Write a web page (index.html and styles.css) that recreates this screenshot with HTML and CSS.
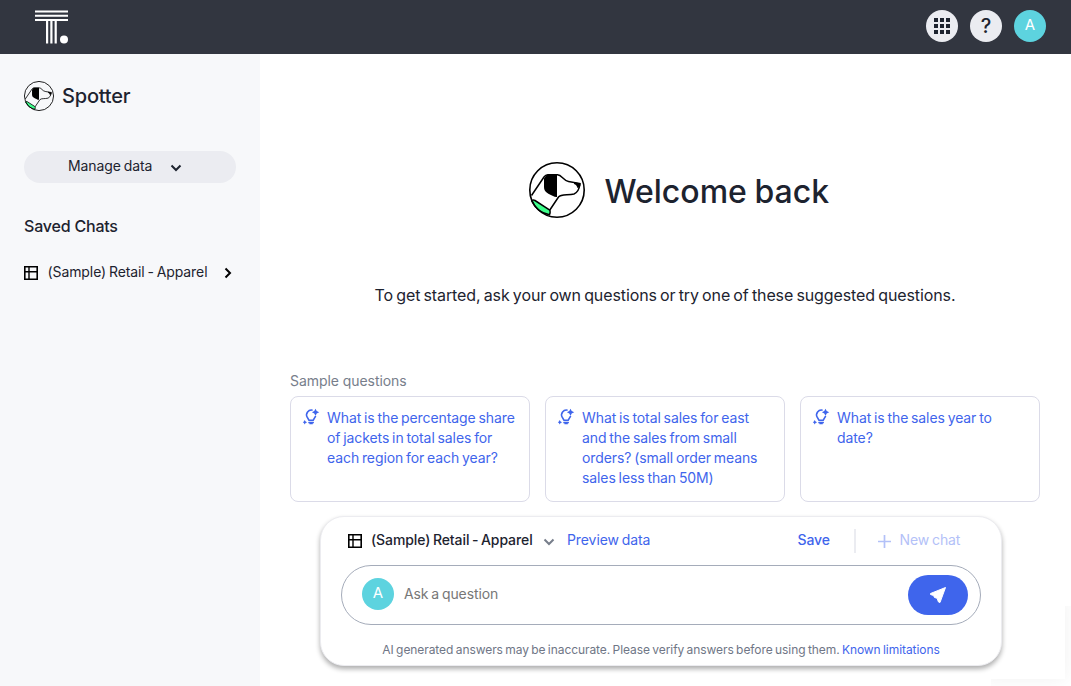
FILE: index.html
```html
<!DOCTYPE html>
<html lang="en">
<head>
<meta charset="utf-8">
<title>Spotter</title>
<link rel="stylesheet" href="styles.css">
</head>
<body>
<svg class="defs" width="0" height="0">
  <symbol id="dog" viewBox="0 0 56 56">
    <path d="M2.500 33.500 15 15Q16.500 12.800 19 12.800H28.500C33 13 34 18.500 39.500 19.500L51 21.500Q50 30 45 32C39 33.500 32 32 29.500 35L20.500 48.500" fill="none" stroke="#000" stroke-width="1.500"/>
    <path d="M28 12.500V35Q26 35.300 24 34C20 31.500 15 31 15 25V16.500L18 12.500Z"/>
    <path d="M45 20l6.500 1.500q.5 4-3 4.500-1-3.500-3.500-4z"/>
    <path d="M3 39.500Q3.500 37 6 38.500L20 47.500Q22 49 20.500 52.800Q8 50 3 39.500Z" fill="#3dff8b" stroke="#000" stroke-width="1.500"/>
    <circle cx="28" cy="28" r="27.200" fill="none" stroke="#000" stroke-width="1.600"/>
  </symbol>
  <symbol id="table" viewBox="0 0 14 14">
    <path d="M.8.800h12.400v12.400H.8z" fill="none" stroke="#000" stroke-width="1.600"/>
    <path d="M1 4.500h12" fill="none" stroke="#000" stroke-width="1"/>
    <path d="M1 8.500h12M5 1v12" fill="none" stroke="#000" stroke-width="1.300"/>
  </symbol>
  <symbol id="table-compact" viewBox="0 0 14 14">
    <path d="M.8.800h12.400v12.400H.8z" fill="none" stroke="#000" stroke-width="1.600"/>
    <path d="M1 5.700h12M5 1v12" fill="none" stroke="#000" stroke-width="1.400"/>
  </symbol>
  <symbol id="bulb" viewBox="0 0 16 16">
    <path d="M9.600 1.200A4.800 4.800 0 0 0 4.200 8.200L6.100 11.400h4l1.900-3.200Q12.500 7.500 12.500 7" fill="none" stroke="#3f65ec" stroke-width="1.600"/>
    <path d="M12.500-.2l1.200 2.300 2.500 1.100-2.500 1.200-1.200 2.700-1.200-2.700-2.400-1.200 2.400-1.100zM5.300 13h5.600v1.300H9.800v1H6.400v-1H5.300zM1.700 11l.9 1.400 1.500.8-1.500.8-.9 1.400-.8-1.400-1.100-.8 1.100-.8z" fill="#3f65ec"/>
  </symbol>
  <symbol id="down" viewBox="0 0 12 8">
    <path d="M1.500 1.500 6 6l4.500-4.500" fill="none" stroke="currentColor" stroke-width="2"/>
  </symbol>
</svg>
<header class="topbar">
  <svg class="logo" width="34" height="34" viewBox="0 0 34 34" fill="#fff">
    <path d="M0 .500h33v2H0zM0 4.800h33v2H0zM0 9h33v2H0zM11 11h2.200v22.500H11zM15.300 11h2.200v22.500h-2.200zM19.600 11h2.200v22.500h-2.200z"/>
    <circle cx="29" cy="29.500" r="4"/>
  </svg>
  <div class="actions">
    <span class="round"><svg width="16" height="16" viewBox="0 0 16 16"><path d="M0 0h4v4H0zM6 0h4v4H6zM12 0h4v4h-4zM0 6h4v4H0zM6 6h4v4H6zM12 6h4v4h-4zM0 12h4v4H0zM6 12h4v4H6zM12 12h4v4h-4z" fill="#1d232f"/></svg></span>
    <span class="round help">?</span>
    <span class="round avatar">A</span>
  </div>
</header>
<div class="body">
  <aside class="sidebar">
    <div class="brand"><svg width="30" height="30"><use href="#dog"/></svg><span>Spotter</span></div>
    <div class="manage"><span>Manage data</span><svg width="12" height="8"><use href="#down"/></svg></div>
    <h2 class="saved">Saved Chats</h2>
    <div class="chat"><svg width="14" height="14"><use href="#table-compact"/></svg><span class="chat-name">(Sample) Retail - Apparel</span><svg width="8" height="12" viewBox="0 0 8 12"><path d="M1.500 1.500 6 6l-4.500 4.500" fill="none" stroke="#000" stroke-width="2"/></svg></div>
  </aside>
  <main class="main">
    <div class="welcome"><svg width="56" height="56"><use href="#dog"/></svg><h1>Welcome back</h1></div>
    <p class="intro"><span>To get started, ask your own questions or try one of these suggested questions.</span></p>
    <div class="label"><span>Sample questions</span></div>
    <div class="cards">
      <div class="card"><svg width="16" height="16"><use href="#bulb"/></svg><p>What is the percentage share<br>of jackets in total sales for<br>each region for each year?</p></div>
      <div class="card"><svg width="16" height="16"><use href="#bulb"/></svg><p>What is total sales for east<br>and the sales from small<br>orders? (small order means<br>sales less than 50M)</p></div>
      <div class="card"><svg width="16" height="16"><use href="#bulb"/></svg><p>What is the sales year to<br>date?</p></div>
    </div>
    <section class="composer">
      <div class="tools">
        <svg width="14" height="14"><use href="#table-compact"/></svg>
        <span class="source">(Sample) Retail - Apparel</span>
        <svg class="source-arrow" width="12" height="8"><use href="#down"/></svg>
        <span class="preview">Preview data</span>
        <span class="save">Save</span>
        <span class="divider"></span>
        <svg class="plus" width="13" height="13" viewBox="0 0 13 13"><path d="M6.500 0v13M0 6.500h13" stroke="#b3c1f8" stroke-width="1.700"/></svg>
        <span class="new">New chat</span>
      </div>
      <div class="prompt">
        <span class="round avatar">A</span>
        <span class="placeholder">Ask a question</span>
        <span class="send"><svg width="18" height="18" viewBox="0 0 18 18"><path d="M16.500 1.500 11 16.500 9.500 16 8 12.200 5.500 11.500 4.500 9.500 1.500 8.500V7.500Z" fill="#fff" stroke="#fff" stroke-linejoin="round"/></svg></span>
      </div>
      <p class="note">AI generated answers may be inaccurate. Please verify answers before using them. <a>Known limitations</a></p>
    </section>
  </main>
</div>
<div class="corner-shade"></div>
</body>
</html>
```
FILE: styles.css
```css
* { box-sizing: border-box; }
body { margin: 0; width: 1071px; height: 686px; overflow: hidden; background: #fff; color: #1d232f; font: 14px/20px Inter, "Liberation Sans", sans-serif; letter-spacing: -.09px; word-spacing: -1px; }
h1, h2, p { margin: 0; font-weight: 400; }
svg { display: block; flex: none; overflow: visible; }
symbol { overflow: visible; }
span { white-space: nowrap; }
.defs { position: absolute; }
.topbar { height: 54px; background: #323640; display: flex; justify-content: space-between; padding: 10px 25px 0 35px; }
.actions { display: flex; gap: 12px; }
.round { width: 32px; height: 32px; flex: none; border-radius: 50%; background: #ebecf1; display: flex; align-items: center; justify-content: center; }
.help { font-size: 20px; font-weight: 500; }
.avatar { background: #5dd3df; color: #fff; font-size: 15px; padding-bottom: 2px; }
.body { display: flex; height: 632px; }
.sidebar { width: 260px; flex: none; background: #f7f8fa; padding: 27px 24px 0; }
.brand { display: flex; align-items: center; gap: 8px; height: 30px; font-size: 20px; font-weight: 500; letter-spacing: -.2px; }
.manage { margin-top: 40px; height: 32px; border-radius: 16px; background: #ebecf1; display: flex; align-items: center; padding: 0 0 2px 44px; gap: 18px; }
.manage svg { margin-top: 4px; }
.saved { margin-top: 33px; font-size: 16px; line-height: 20px; font-weight: 500; letter-spacing: -.2px; word-spacing: 0; }
.chat { display: flex; align-items: center; margin-top: 26px; height: 20px; }
.chat-name { width: 176.5px; margin-left: 9.5px; }
.chat svg:last-child { margin-top: 2px; }
.chat svg:first-child { margin-top: 2px; }
.main { width: 811px; padding: 108px 31px 0 30px; }
.welcome { display: flex; justify-content: center; align-items: center; gap: 20px; height: 56px; padding-left: 27px; }
.welcome h1 { width: 224px; font-size: 32px; line-height: 40px; font-weight: 500; letter-spacing: 0; word-spacing: -1px; padding-top: 3px; white-space: nowrap; }
.intro { margin-top: 67px; text-align: center; font-size: 16px; line-height: 21px; letter-spacing: -.1px; word-spacing: -1.2px; }
.label { margin-top: 65px; color: #777e8b; letter-spacing: -.06px; word-spacing: 0; }
.cards { display: grid; grid-template-columns: repeat(3, 240px); gap: 15px; margin-top: 5px; }
.card { height: 106px; border: 1px solid #dbdbe8; border-radius: 8px; display: flex; gap: 8px; padding: 11px 0 0 12px; color: #3f65ec; white-space: nowrap; }
.card svg { margin-top: 1px; }
.composer { width: 682px; height: 150px; margin: 14px 0 0 30px; border: 1px solid #ececf0; border-radius: 24px; background: #fff; box-shadow: 0 3px 5px rgba(0,0,0,.32); padding: 12px 20px 0; }
.tools { display: flex; align-items: center; height: 24px; padding-left: 7px; color: #3f65ec; }
.tools .source, .tools .preview, .tools .save, .tools .new { padding-bottom: 2px; }
.source { width: 163px; margin-left: 9px; color: #1d232f; font-weight: 500; }
.source-arrow { margin: 1px 0 0 9px; color: #777e8b; }
.preview { width: 230px; margin-left: 12px; }
.save { width: 57px; padding-left: .5px; font-weight: 500; }
.divider { width: 2px; height: 24px; background: #ebecf1; }
.plus { margin-left: 22px; }
.new { margin-left: 8.5px; color: #b3c1f8; }
.prompt { margin-top: 12px; height: 60px; border: 1px solid #a5acba; border-radius: 30px; display: flex; align-items: center; padding: 0 12px 0 20px; }
.prompt .avatar { margin-bottom: 2px; }
.placeholder { margin-left: 10px; padding-bottom: 2px; color: #777; flex: 1; }
.send { width: 60px; height: 40px; border-radius: 20px; background: #3f65ec; display: flex; align-items: center; justify-content: center; }
.note { margin-top: 15px; text-align: center; font-size: 12px; line-height: 20px; letter-spacing: -.07px; word-spacing: -.9px; white-space: nowrap; color: #6f7686; }
.note a { color: #3f65ec; }
.corner-shade { position: absolute; left: 981px; top: 596px; width: 84px; height: 83px; box-shadow: 0 0 18px rgba(0,0,0,.06); clip-path: polygon(84px 10px, 90px 10px, 90px 90px, 10px 90px, 10px 83px, 84px 83px); }
```
